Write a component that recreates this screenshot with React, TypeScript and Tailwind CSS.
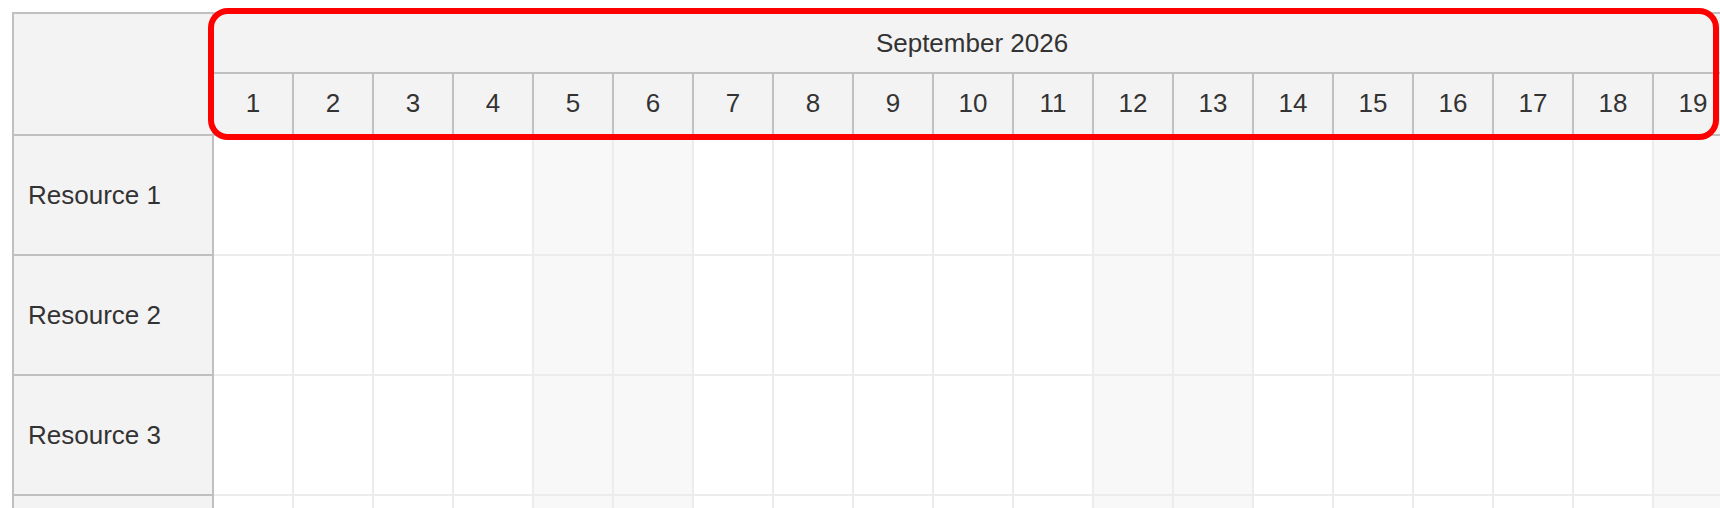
import React from "react";

const DAYS = Array.from({ length: 19 }, (_, i) => i + 1);
const RESOURCES = ["Resource 1", "Resource 2", "Resource 3"];
// September 2026 starts on a Tuesday, so the 5th/6th, 12th/13th and 19th are weekend days.
const isWeekend = (d: number) => {
  const dow = (d + 1) % 7; // 0 = Sunday
  return dow === 0 || dow === 6;
};

function BodyRow() {
  return (
    <div className="flex">
      {DAYS.map((d) => (
        <div
          key={d}
          className={
            "w-[80px] h-[120px] shrink-0 border-r-2 border-b-2 border-[#ececec] " +
            (isWeekend(d) ? "bg-[#f8f8f8]" : "bg-white")
          }
        />
      ))}
    </div>
  );
}

export default function App() {
  return (
    <div className="relative w-[1720px] h-[508px] overflow-hidden bg-white text-[#333] text-[26px] font-['Liberation_Sans',Arial,sans-serif]">
      <div className="pt-[12px] pl-[12px]">
        <div className="flex w-max border-t-2 border-l-2 border-[#c0c0c0]">
          {/* resource column */}
          <div className="w-[200px] shrink-0 border-r-2 border-[#c0c0c0] bg-[#f3f3f3]">
            <div className="h-[122px] border-b-2 border-[#c0c0c0]" />
            {RESOURCES.map((r) => (
              <div
                key={r}
                className="h-[120px] border-b-2 border-[#c0c0c0] flex items-center pl-[14px] leading-none whitespace-nowrap"
              >
                {r}
              </div>
            ))}
            <div className="h-[120px] border-b-2 border-[#c0c0c0]" />
          </div>

          {/* timeline */}
          <div className="flex flex-col">
            <div className="h-[60px] border-b-2 border-[#c0c0c0] bg-[#f3f3f3] flex items-center justify-center pr-[4px] leading-none">
              September 2026
            </div>
            <div className="flex">
              {DAYS.map((d) => (
                <div
                  key={d}
                  className="w-[80px] h-[62px] shrink-0 border-r-2 border-b-2 border-[#c0c0c0] bg-[#f3f3f3] flex items-center justify-center pb-[2px] leading-none"
                >
                  {d}
                </div>
              ))}
            </div>
            {RESOURCES.map((r) => (
              <BodyRow key={r} />
            ))}
            <BodyRow />
          </div>
        </div>
      </div>

      {/* highlight frame around the time header */}
      <div className="absolute left-[208px] top-[8px] w-[1511px] h-[132px] border-[6px] border-[#ff0000] rounded-[20px] pointer-events-none" />
    </div>
  );
}
